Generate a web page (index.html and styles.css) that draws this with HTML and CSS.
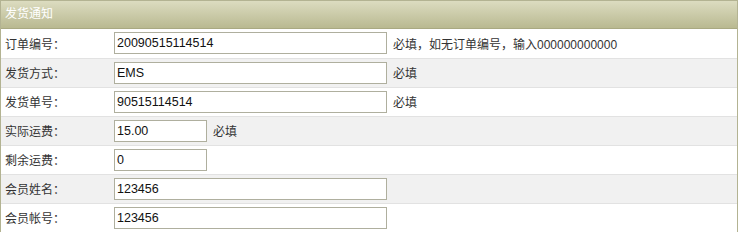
FILE: index.html
```html
<!DOCTYPE html>
<html lang="zh-CN">

<head>
    <meta charset="UTF-8">
    <title>发货通知</title>
    <link rel="stylesheet" href="styles.css">
</head>

<body>

    <div class="notice">
        <div class="notice__title">发货通知</div>

        <table class="notice__form">
            <tr>
                <td class="form__label">订单编号：</td>
                <td><input class="form__input" type="text" value="20090515114514"><span class="form__tip">必填，如无订单编号，输入000000000000</span></td>
            </tr>
            <tr class="form__row--alt">
                <td class="form__label">发货方式：</td>
                <td><input class="form__input" type="text" value="EMS"><span class="form__tip">必填</span></td>
            </tr>
            <tr>
                <td class="form__label">发货单号：</td>
                <td><input class="form__input" type="text" value="90515114514"><span class="form__tip">必填</span></td>
            </tr>
            <tr class="form__row--alt">
                <td class="form__label">实际运费：</td>
                <td><input class="form__input form__input--short" type="text" value="15.00"><span class="form__tip">必填</span></td>
            </tr>
            <tr>
                <td class="form__label">剩余运费：</td>
                <td><input class="form__input form__input--short" type="text" value="0"></td>
            </tr>
            <tr class="form__row--alt">
                <td class="form__label">会员姓名：</td>
                <td><input class="form__input" type="text" value="123456"></td>
            </tr>
            <tr>
                <td class="form__label">会员帐号：</td>
                <td><input class="form__input" type="text" value="123456"></td>
            </tr>
        </table>
    </div>

</body>

</html>
```

FILE: styles.css
```css
* {
    padding: 0;
    margin: 0;
    box-sizing: border-box;
}

body {
    background-color: white;
    font-family: "Liberation Sans", "Noto Sans CJK SC", sans-serif;
    font-size: 12px;
    color: #333;
}

.notice {
    width: 738px;
    border: 1px solid #b3b392;
    border-bottom: none;
}

.notice__title {
    height: 28px;
    line-height: 27px;
    padding-left: 4px;
    color: white;
    background: linear-gradient(#dcdcc0, #b9b991);
    border-bottom: 1px solid #a9a982;
}

.notice__form {
    width: 100%;
    border-collapse: collapse;
}

.notice__form td {
    height: 29px;
    border-bottom: 1px solid #e2e2e2;
    vertical-align: middle;
    white-space: nowrap;
}

.form__row--alt td {
    background-color: #f1f1f1;
}

.form__label {
    width: 113px;
    padding-left: 4px;
}

.form__input {
    width: 273px;
    height: 22px;
    padding: 0 2px;
    border: 1px solid #afaf9e;
    background-color: white;
    font-family: "Liberation Sans", sans-serif;
    font-size: 12.5px;
    color: #111;
    vertical-align: middle;
}

.form__input--short {
    width: 93px;
}

.form__tip {
    margin-left: 6px;
    vertical-align: middle;
}
```
